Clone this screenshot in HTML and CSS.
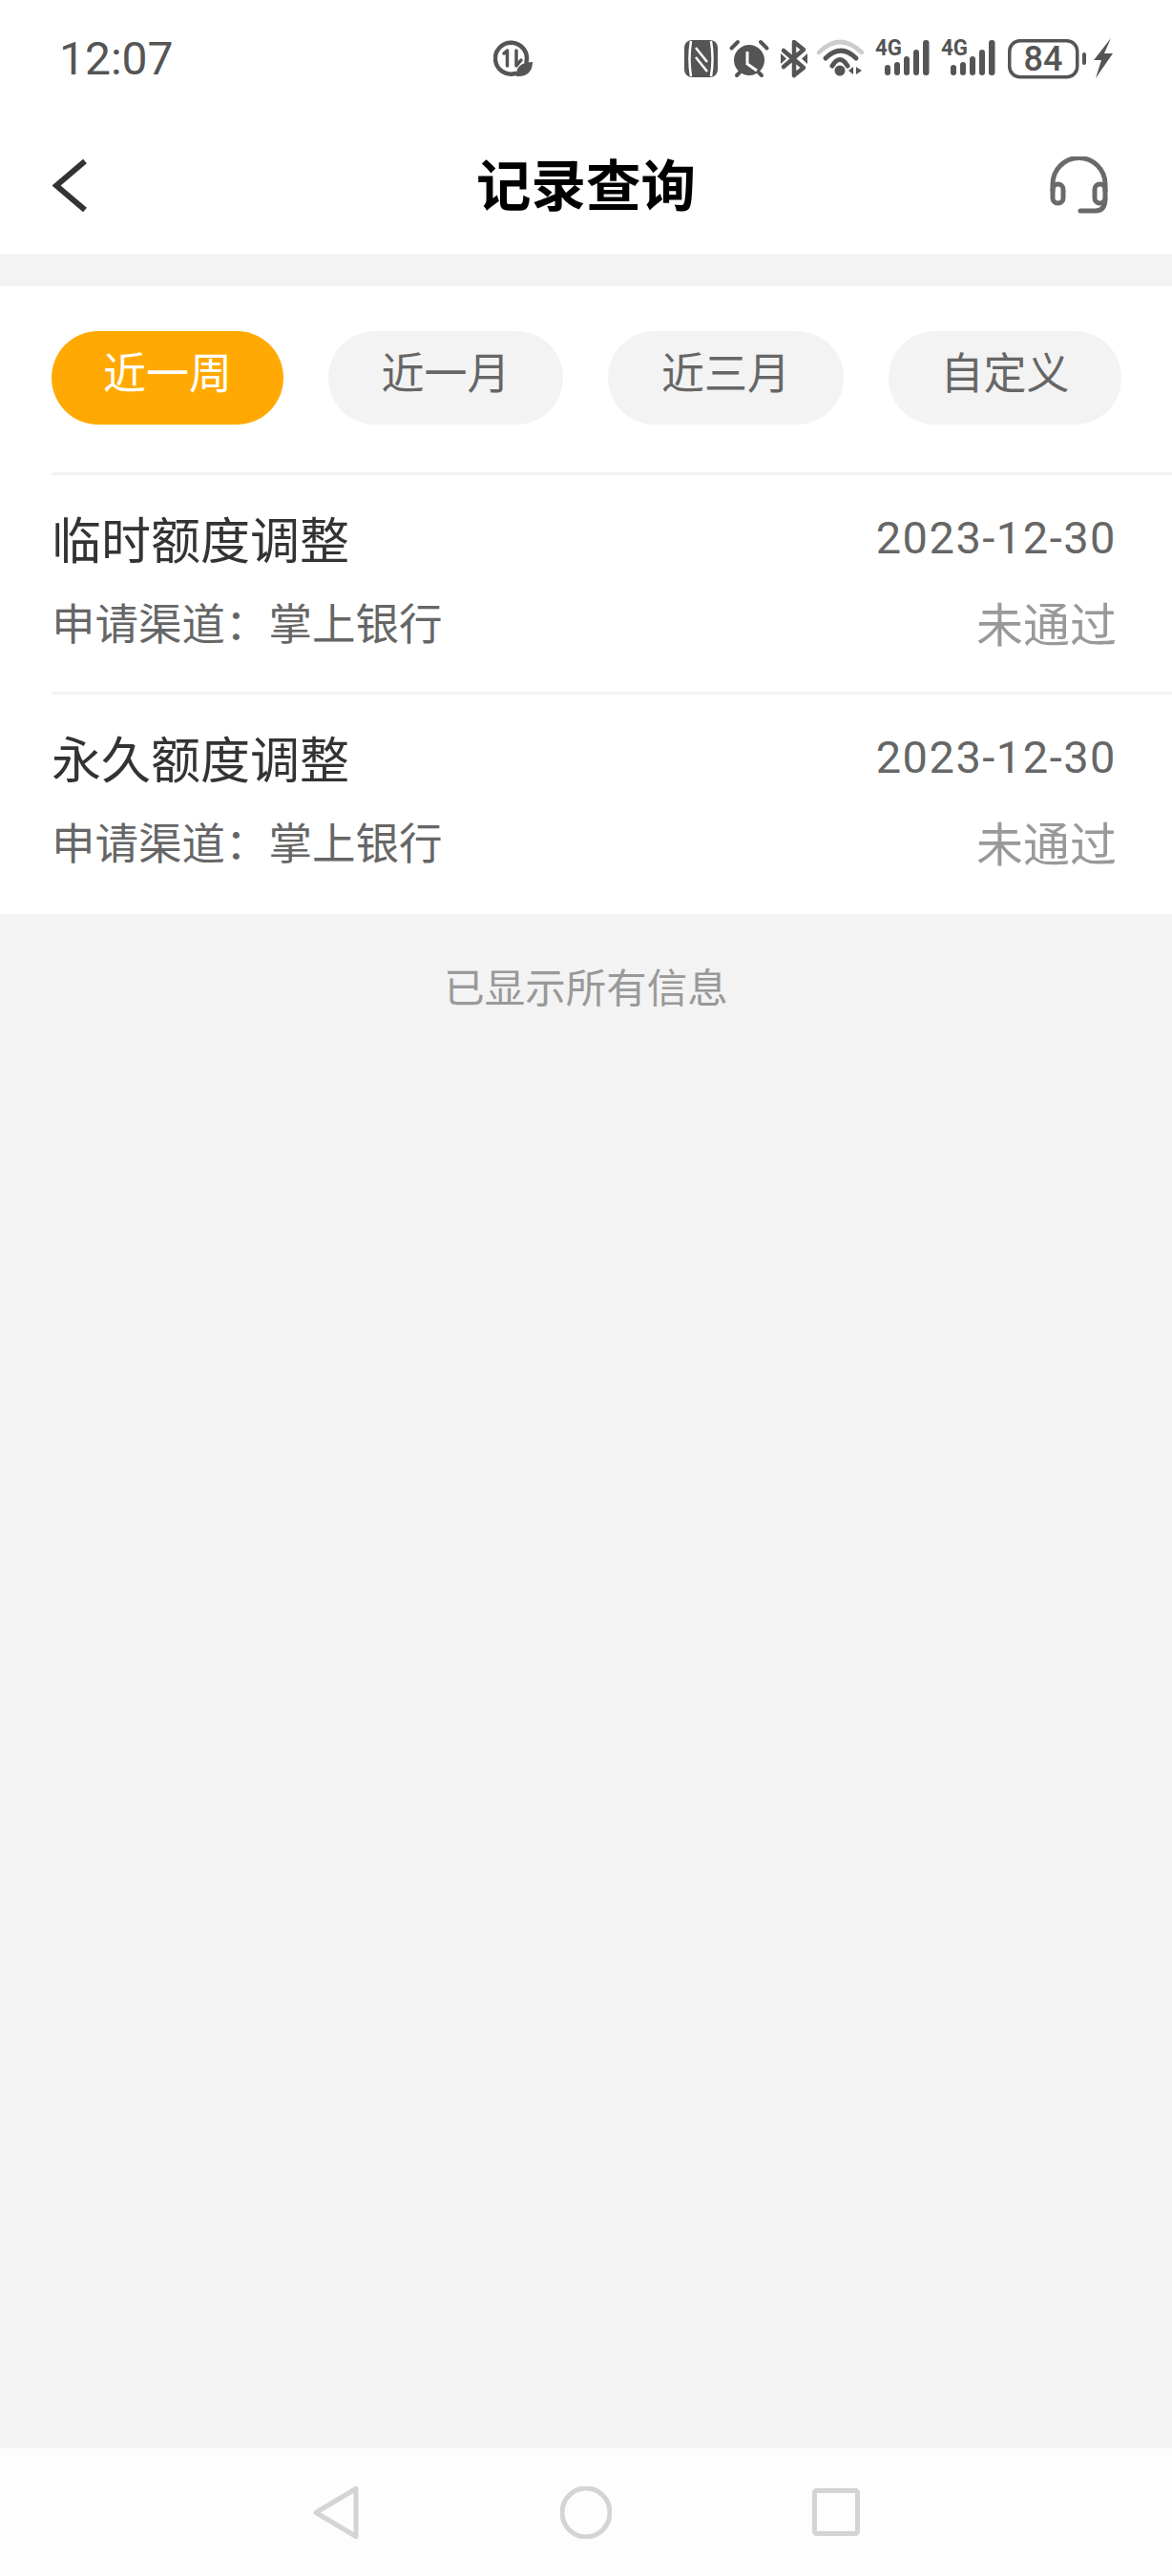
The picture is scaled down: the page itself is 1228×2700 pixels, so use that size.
FILE: index.html
```html
<!DOCTYPE html>
<html lang="zh-CN">
<head>
    <meta charset="UTF-8">
    <title>记录查询</title>
    <meta name="viewport" content="width=device-width, initial-scale=1">
    <link rel="stylesheet" href="styles.css">
</head>
<body>
    <div class="status-bar">
        <div class="status-time">12:07</div>
        <svg class="status-saver" width="42" height="40" viewBox="0 0 42 40">
            <path class="line" d="M34.500 24A16.500 16.500 0 1 0 23 36" stroke-width="4.500"/>
            <path class="line" d="M11 15l3.500-3V28M24 12V28l5-6" stroke-width="3.500"/>
            <path class="solid" d="M24 39C23 29 30 24 41 24C41 34 35 40 24 39Z"/>
        </svg>
        <div class="status-icons">
            <svg width="35" height="39" viewBox="0 0 35 39">
                <rect class="solid" width="35" height="39" rx="8"/>
                <path class="cut" d="M7 1C5 13 5 26 7 38M28 1C30 13 30 26 28 38M12 8L24 23M12 18L24 33" stroke-width="2.500"/>
            </svg>
            <svg width="40" height="39" viewBox="0 0 40 39">
                <circle class="solid" cx="20" cy="21" r="16"/>
                <path class="cut" d="M18 12V25L28 32" stroke-width="3"/>
                <path class="line" d="M1.500 8.500L8 2M38.500 8.500L32 2M7 37L10 34M33 37L30 34" stroke-width="4"/>
            </svg>
            <svg width="28" height="39" viewBox="0 0 28 39">
                <path class="line" d="M3 11L24 29L14 37V2L24 10L3 28" stroke-width="4.500"/>
                <path class="solid" d="M0 14L6 19.500L0 25ZM28 14L22 19.500L28 25Z"/>
            </svg>
            <svg class="status-wifi" width="50" height="39" viewBox="0 0 50 39">
                <path class="line-light" d="M3 13Q25 -9 48 13" stroke-width="4.500"/>
                <path class="line" d="M10 19Q26 3 42 19" stroke-width="5"/>
                <path class="line" d="M17 27Q25 14 33 27" stroke-width="5"/>
                <circle class="solid" cx="25" cy="32" r="5.500"/>
                <path class="solid" d="M34 32L39 28V36ZM42 28V36L48 32Z"/>
            </svg>
            <svg class="status-signal" width="57" height="39" viewBox="0 0 57 39">
                <text class="signal-text" x="0" y="16" textLength="28" lengthAdjust="spacingAndGlyphs">4G</text>
                <rect class="solid" x="10" y="26" width="6" height="11" rx="3"/>
                <rect class="solid" x="20" y="23" width="6" height="14" rx="3"/>
                <rect class="solid" x="30" y="17" width="6" height="20" rx="3"/>
                <rect class="solid" x="40" y="10" width="6" height="27" rx="3"/>
                <rect class="solid" x="50" y="0" width="6.500" height="37" rx="3"/>
            </svg>
            <svg class="status-signal" width="57" height="39" viewBox="0 0 57 39">
                <text class="signal-text" x="0" y="16" textLength="28" lengthAdjust="spacingAndGlyphs">4G</text>
                <rect class="solid" x="10" y="26" width="6" height="11" rx="3"/>
                <rect class="solid" x="20" y="23" width="6" height="14" rx="3"/>
                <rect class="solid" x="30" y="17" width="6" height="20" rx="3"/>
                <rect class="solid" x="40" y="10" width="6" height="27" rx="3"/>
                <rect class="solid" x="50" y="0" width="6.500" height="37" rx="3"/>
            </svg>
            <svg width="82" height="41" viewBox="0 0 82 41">
                <rect class="line" x="1.750" y="1.750" width="71" height="38" rx="11" stroke-width="3.500"/>
                <text class="battery-text" x="37" y="33" text-anchor="middle">84</text>
                <rect class="solid" x="78" y="14" width="4" height="13" rx="2"/>
            </svg>
            <svg class="status-bolt" width="20" height="42" viewBox="0 0 20 42">
                <path class="solid" d="M18 0L0 23H8L2 42L20 16H11Z"/>
            </svg>
        </div>
    </div>

    <div class="header">
        <svg class="back-icon" width="36" height="55" viewBox="0 0 36 55">
            <polyline points="34,2 4,27.500 34,53"/>
        </svg>
        <div class="header-title">记录查询</div>
        <svg class="service-icon" width="61" height="60" viewBox="0 0 61 60">
            <path d="M3 36V29A27.500 27.500 0 0 1 58 29V36"/>
            <rect x="3" y="29" width="11" height="20" rx="5.500"/>
            <rect x="47" y="29" width="11" height="20" rx="5.500"/>
            <path d="M58 44Q58 57 48 57H32"/>
        </svg>
    </div>

    <div class="content">
        <div class="panel">
            <div class="filters">
                <div class="filter active">近一周</div>
                <div class="filter">近一月</div>
                <div class="filter">近三月</div>
                <div class="filter">自定义</div>
            </div>
            <div class="record">
                <div class="record-line">
                    <div class="record-name">临时额度调整</div>
                    <div class="record-date">2023-12-30</div>
                </div>
                <div class="record-line">
                    <div class="record-channel">申请渠道：掌上银行</div>
                    <div class="record-state">未通过</div>
                </div>
            </div>
            <div class="record">
                <div class="record-line">
                    <div class="record-name">永久额度调整</div>
                    <div class="record-date">2023-12-30</div>
                </div>
                <div class="record-line">
                    <div class="record-channel">申请渠道：掌上银行</div>
                    <div class="record-state">未通过</div>
                </div>
            </div>
        </div>
        <div class="end-note">已显示所有信息</div>
    </div>

    <div class="nav-bar">
        <svg width="50" height="57" viewBox="0 0 50 57">
            <path d="M46 3.500V53.500L4 28.500Z"/>
        </svg>
        <svg width="54" height="55" viewBox="0 0 54 55">
            <ellipse cx="27" cy="27.500" rx="25" ry="25.500"/>
        </svg>
        <svg width="50" height="50" viewBox="0 0 50 50">
            <rect x="2.500" y="2.500" width="45" height="45" rx="2"/>
        </svg>
    </div>
</body>
</html>
```

FILE: styles.css
```css
body {
    margin: 0;
    height: 2700px;
    display: flex;
    flex-direction: column;
    background: #f3f3f3;
    font-family: "Noto Sans CJK SC", sans-serif;
    overflow: hidden;
}

/* status bar */
.status-bar {
    display: flex;
    align-items: center;
    height: 122px;
    padding-left: 62px;
    background: #fff;
}
.status-time {
    width: 455px;
    font-family: Roboto, sans-serif;
    font-size: 48px;
    color: #555;
}
.status-saver {
    margin-right: 158px;
}
.status-icons {
    display: flex;
    align-items: center;
    gap: 13px;
}
.status-icons svg {
    overflow: visible;
}
.status-wifi {
    margin-left: -4px;
}
.status-signal {
    margin-left: -1px;
}
.status-bolt {
    margin-left: -5px;
}
.solid {
    fill: #555;
}
.line {
    fill: none;
    stroke: #555;
    stroke-linecap: round;
    stroke-linejoin: round;
}
.line-light {
    fill: none;
    stroke: #ccc;
    stroke-linecap: round;
}
.cut {
    fill: none;
    stroke: #fff;
}
.signal-text {
    font-family: Roboto, sans-serif;
    font-weight: 700;
    font-size: 23px;
    fill: #555;
}
.battery-text {
    font-family: Roboto, sans-serif;
    font-weight: 500;
    font-size: 36px;
    fill: #555;
}

/* header */
.header {
    display: grid;
    grid-template-columns: 1fr auto 1fr;
    align-items: center;
    height: 144px;
    padding: 0 67px;
    background: #fff;
}
.back-icon {
    margin-left: -12px;
}
.back-icon polyline {
    fill: none;
    stroke: #333;
    stroke-width: 6;
}
.header-title {
    padding-bottom: 6px;
    font-size: 57.500px;
    font-weight: 700;
    color: #000;
}
.service-icon {
    justify-self: end;
}
.service-icon path,
.service-icon rect {
    fill: none;
    stroke: #6a6a6a;
    stroke-width: 5;
    stroke-linecap: round;
}

/* list */
.content {
    flex: 1;
    padding-top: 34px;
}
.panel {
    background: #fff;
    padding-bottom: 3px;
}
.filters {
    display: grid;
    grid-template-columns: 243px 246px 247px 244px;
    justify-content: space-between;
    padding: 47px 53px 50px 54px;
}
.filter {
    height: 84px;
    padding-bottom: 14px;
    border-radius: 49px;
    background: #f3f3f3;
    color: #666;
    font-size: 45px;
    line-height: 84px;
    text-align: center;
}
.filter.active {
    background: #ffa902;
    color: #fff;
}
.record {
    display: grid;
    gap: 28px;
    align-content: start;
    box-sizing: border-box;
    height: 230px;
    margin-left: 54px;
    padding: 35px 58px 0 0;
    border-top: 3px solid #f3f3f3;
}
.record-line {
    display: flex;
    justify-content: space-between;
    align-items: center;
    height: 60px;
}
.record-name {
    font-size: 52px;
    color: #333;
}
.record-date {
    font-family: Roboto, sans-serif;
    font-size: 47px;
    letter-spacing: 1.500px;
    color: #666;
}
.record-channel {
    font-size: 45.500px;
    color: #666;
}
.record-state {
    font-size: 49px;
    color: #999;
}
.end-note {
    padding-top: 50px;
    font-size: 42.500px;
    line-height: 50px;
    text-align: center;
    color: #999;
}

/* system nav */
.nav-bar {
    display: grid;
    grid-template-columns: repeat(3, 262px);
    justify-content: center;
    justify-items: center;
    align-items: center;
    height: 134px;
    background: #fdfdfd;
}
.nav-bar path,
.nav-bar ellipse,
.nav-bar rect {
    fill: none;
    stroke: #d4d4d4;
    stroke-width: 5;
    stroke-linejoin: round;
}
```
